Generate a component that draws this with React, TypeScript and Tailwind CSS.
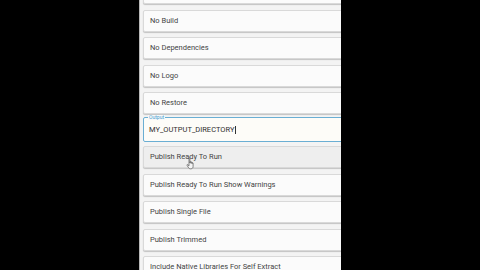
import React from "react";

const items1 = ["", "No Build", "No Dependencies", "No Logo", "No Restore"];
const items2 = [
  "Publish Ready To Run Show Warnings",
  "Publish Single File",
  "Publish Trimmed",
  "Include Native Libraries For Self Extract",
];

function Card({ label, hover }: { label: string; hover?: boolean }) {
  return (
    <div
      className={`h-[22px] shrink-0 w-[212px] flex items-center pl-[6px] border border-[#d9d9d9] rounded-[2px] shadow-[0_1px_1px_rgba(0,0,0,0.2)] text-[7.5px] text-[#444444] whitespace-nowrap ${
        hover ? "bg-[#eeeeee]" : "bg-[#fbfbfb]"
      }`}
    >
      {label}
    </div>
  );
}

export default function App() {
  return (
    <div
      className="w-[480px] h-[270px] flex bg-black overflow-hidden relative"
      style={{ fontFamily: "Roboto, 'Liberation Sans', sans-serif" }}
    >
      <div className="w-[139px] shrink-0 bg-black" />
      <div className="w-[202px] shrink-0 h-full bg-[#f3f3f3] border-l border-[#b8b8b8] overflow-hidden">
        <div className="flex flex-col gap-[5.5px] pl-[3px] mt-[-18px]">
          {items1.map((t, i) => (
            <Card key={i} label={t} />
          ))}
          <div className="relative h-[25px] shrink-0 w-[212px] mt-[-2.5px] mb-[-1.5px] border border-[#6aaed3] rounded-[2px] bg-[#fdfcf8] flex items-center pl-[5px] text-[7.5px] text-[#2e2e2e] whitespace-nowrap">
            <span className="absolute left-[4px] top-[-3.5px] px-[1px] text-[5px] leading-none text-[#4a9fd0] bg-[#f7f9fa]">
              Output
            </span>
            <span className="mt-[1px]">MY_OUTPUT_DIRECTORY</span>
            <span className="w-[0.7px] h-[8px] bg-[#333] ml-[0.5px] mt-[1px]" />
          </div>
          <Card label="Publish Ready To Run" hover />
          {items2.map((t, i) => (
            <Card key={i} label={t} />
          ))}
        </div>
      </div>
      <div className="flex-1 bg-black" />
      <svg
        className="absolute left-[186px] top-[157px]"
        width="10"
        height="13"
        viewBox="0 0 10 13"
      >
        <path
          d="M3 1.2c0-.6.9-.6.9 0V6l.2-1.2c.2-.5.9-.4.9.1V6.3l.2-1c.2-.5.9-.4.9.1v1.3l.2-.8c.2-.4.8-.3.8.1V9.5c0 1.3-.9 2.3-2.2 2.3H4.4c-.8 0-1.4-.4-1.8-1L1 8.3c-.3-.5.3-1 .8-.6L3 8.8z"
          fill="#f4f4f4"
          stroke="#555"
          strokeWidth="0.7"
          strokeLinejoin="round"
        />
      </svg>
    </div>
  );
}
